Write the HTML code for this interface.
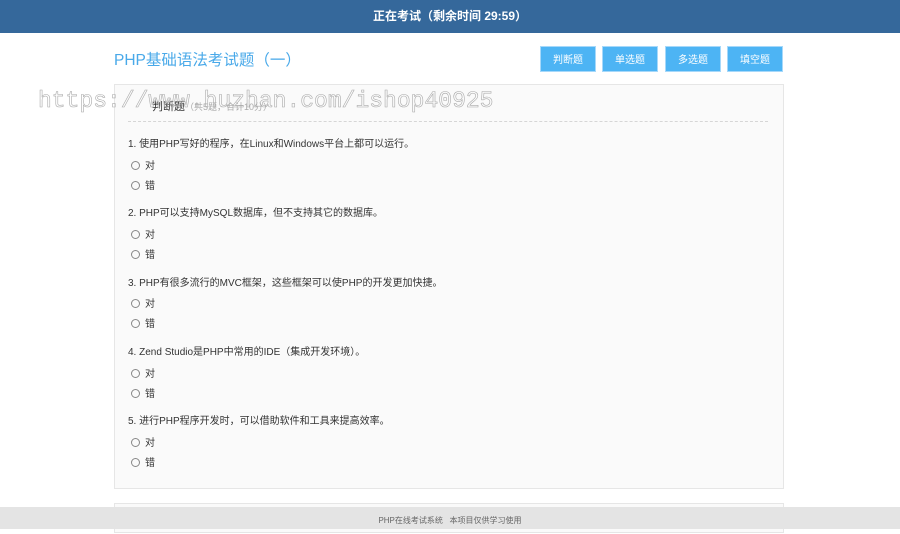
<!DOCTYPE html>
<html><head><meta charset="utf-8"><style>
*{margin:0;padding:0;box-sizing:border-box}
body{width:900px;height:529px;overflow:hidden;background:#fff;font-family:"Liberation Sans","Noto Sans CJK SC",sans-serif;position:relative;color:#333}
.hd{position:absolute;left:0;top:0;width:900px;height:33px;background:#35689b;color:#fff;font-weight:bold;font-size:12px;text-align:center;line-height:32px}
.title{position:absolute;left:114px;top:48px;font-size:15.5px;color:#49a9e9}
.btn{position:absolute;top:46px;width:56px;height:26px;background:#4db4f4;border:1px solid #a6d8fa;color:#fff;font-size:10px;text-align:center;line-height:24px;padding-top:2px}
.panel{position:absolute;left:114px;top:84px;width:670px;height:405px;background:#fafafa;border:1px solid #e6e6e6}
.panel2{position:absolute;left:114px;top:503px;width:670px;height:30px;background:#fafafa;border:1px solid #e6e6e6}
.sec{position:absolute;left:152px;top:98px;font-size:11px;color:#333}
.sec span{color:#aaa;font-size:9px}
.dash{position:absolute;left:128px;top:121px;width:640px;border-top:1px dashed #d6d6d6}
.q{position:absolute;left:128px;font-size:10px;color:#333}
.o{position:absolute;left:131px;font-size:10px;color:#333}
.o i{display:inline-block;width:9px;height:9px;border:1px solid #888;border-radius:50%;vertical-align:-1px;margin-right:5px}
.ft{position:absolute;left:0;top:507px;width:900px;height:22px;background:#e4e4e4;color:#666;font-size:8px;text-align:center;line-height:27px}
.wm{position:absolute;left:38px;top:88px;font-family:"Liberation Mono",monospace;font-size:23px;color:transparent;-webkit-text-stroke:0.6px #aaa;white-space:nowrap}
</style></head><body>
<div class="hd">正在考试（剩余时间 29:59）</div>
<div class="title">PHP基础语法考试题（一）</div>
<div class="btn" style="left:540px">判断题</div>
<div class="btn" style="left:602px">单选题</div>
<div class="btn" style="left:665px">多选题</div>
<div class="btn" style="left:727px">填空题</div>
<div class="panel"></div>
<div class="panel2"></div>
<div class="sec">判断题<span>（共5题，合计10分）</span></div>
<div class="dash"></div>
<div class="q" style="top:135px">1. 使用PHP写好的程序，在Linux和Windows平台上都可以运行。</div>
<div class="o" style="top:157px"><i></i>对</div>
<div class="o" style="top:177px"><i></i>错</div>
<div class="q" style="top:204px">2. PHP可以支持MySQL数据库，但不支持其它的数据库。</div>
<div class="o" style="top:226px"><i></i>对</div>
<div class="o" style="top:246px"><i></i>错</div>
<div class="q" style="top:274px">3. PHP有很多流行的MVC框架，这些框架可以使PHP的开发更加快捷。</div>
<div class="o" style="top:295px"><i></i>对</div>
<div class="o" style="top:315px"><i></i>错</div>
<div class="q" style="top:343px">4. Zend Studio是PHP中常用的IDE（集成开发环境）。</div>
<div class="o" style="top:365px"><i></i>对</div>
<div class="o" style="top:385px"><i></i>错</div>
<div class="q" style="top:412px">5. 进行PHP程序开发时，可以借助软件和工具来提高效率。</div>
<div class="o" style="top:434px"><i></i>对</div>
<div class="o" style="top:454px"><i></i>错</div>
<div class="wm">https://www.huzhan.com/ishop40925</div>
<div class="ft">PHP在线考试系统&nbsp;&nbsp;&nbsp;本项目仅供学习使用</div>
</body></html>
